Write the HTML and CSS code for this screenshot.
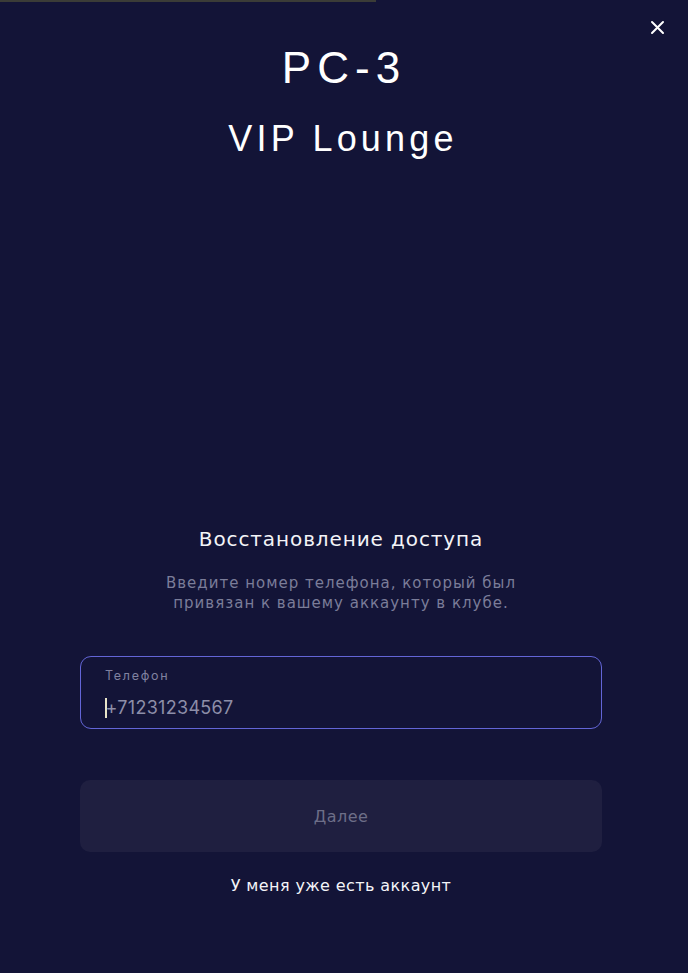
FILE: index.html
```html
<!DOCTYPE html>
<html lang="ru">
<head>
<meta charset="utf-8">
<title>PC-3 VIP Lounge</title>
<link rel="stylesheet" href="styles.css">
</head>
<body>
<div class="screen">
  <div class="progress"></div>
  <button class="close" aria-label="Закрыть">
    <svg width="15" height="15" viewBox="0 0 15 15"><path d="M2 2 L13 13 M13 2 L2 13" stroke="#ffffff" stroke-width="2" stroke-linecap="round"/></svg>
  </button>
  <header class="brand">
    <div class="pc">PC-3</div>
    <div class="lounge">VIP Lounge</div>
  </header>
  <main class="form">
    <h1 class="title">Восстановление доступа</h1>
    <p class="hint">Введите номер телефона, который был<br>привязан к вашему аккаунту в клубе.</p>
    <div class="field">
      <span class="label">Телефон</span>
      <span class="value"><span class="caret"></span>+71231234567</span>
    </div>
    <button class="next">Далее</button>
    <a class="link">У меня уже есть аккаунт</a>
  </main>
</div>
</body>
</html>
```
FILE: styles.css
```css
html, body {
  margin: 0;
  padding: 0;
  background: #131437;
}
.screen {
  position: relative;
  box-sizing: border-box;
  width: 688px;
  height: 973px;
  padding-right: 6px;
  background: #131437;
  display: flex;
  flex-direction: column;
  align-items: center;
  font-family: "DejaVu Sans", Verdana, sans-serif;
  color: #ffffff;
  overflow: hidden;
}
.progress {
  position: absolute;
  top: 0;
  left: 0;
  width: 376px;
  height: 2px;
  background: #3b3c37;
}
.close {
  position: absolute;
  top: 20px;
  right: 23px;
  width: 15px;
  height: 15px;
  padding: 0;
  border: 0;
  background: none;
  display: flex;
}
.brand {
  margin-top: 44px;
  display: flex;
  flex-direction: column;
  align-items: center;
  font-family: "Liberation Sans", Arial, sans-serif;
}
.pc {
  font-size: 44px;
  line-height: 48px;
  letter-spacing: 6px;
  padding-left: 6px;
}
.lounge {
  margin-top: 27px;
  font-size: 36px;
  line-height: 40px;
  letter-spacing: 4.2px;
  padding-left: 4px;
}
.form {
  margin-top: 368px;
  width: 522px;
  display: flex;
  flex-direction: column;
  align-items: center;
}
.title {
  margin: 0;
  font-size: 20px;
  font-weight: normal;
  line-height: 24px;
  letter-spacing: 0.9px;
  color: #f4f4f8;
}
.hint {
  margin: 22px 0 0;
  font-size: 15px;
  line-height: 20px;
  letter-spacing: 1px;
  text-align: center;
  color: #7b7d99;
}
.field {
  margin-top: 43px;
  box-sizing: border-box;
  width: 100%;
  height: 73px;
  border: 1.5px solid #6365d6;
  border-radius: 11px;
  padding: 10.5px 24px 0;
  display: flex;
  flex-direction: column;
  font-family: Inter, "Noto Sans", sans-serif;
}
.label {
  font-size: 12.5px;
  line-height: 16px;
  letter-spacing: 1.7px;
  color: #8082a0;
}
.value {
  margin-top: 13px;
  font-size: 18px;
  line-height: 22px;
  letter-spacing: 0.3px;
  color: #8d8ea8;
  display: flex;
  align-items: center;
}
.caret {
  width: 1.5px;
  height: 20px;
  background: #e8e4c8;
  margin-right: -1px;
}
.next {
  margin-top: 51px;
  width: 100%;
  height: 72px;
  border: 0;
  border-radius: 10px;
  background: #1f1f40;
  font-family: "DejaVu Sans", Verdana, sans-serif;
  font-size: 16px;
  letter-spacing: 0.5px;
  color: #6d6e88;
}
.link {
  margin-top: 24px;
  font-size: 16px;
  line-height: 20px;
  letter-spacing: 0.4px;
  color: #f4f4f8;
}
```
